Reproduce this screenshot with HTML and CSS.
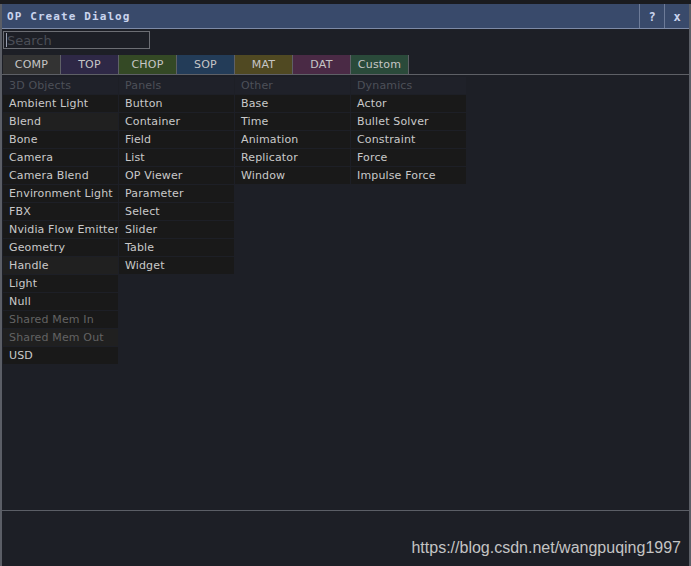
FILE: index.html
```html
<!DOCTYPE html>
<html>
<head>
<meta charset="utf-8">
<link rel="stylesheet" href="styles.css">
</head>
<body>
<div class="topstrip">
  <span></span><span></span><span></span><span></span><span></span>
</div>
<div class="dialog">
  <div class="titlebar">
    <div class="title">OP Create Dialog</div>
    <div class="tbtn">?</div>
    <div class="tbtn">x</div>
  </div>
  <div class="body">
    <div class="search"><span class="caret"></span><span class="ph">Search</span></div>
    <div class="tabs">
      <div class="tab comp">COMP</div>
      <div class="tab top">TOP</div>
      <div class="tab chop">CHOP</div>
      <div class="tab sop">SOP</div>
      <div class="tab mat">MAT</div>
      <div class="tab dat">DAT</div>
      <div class="tab custom">Custom</div>
    </div>
    <div class="columns">
      <div class="col">
        <div class="head">3D Objects</div>
        <div class="item">Ambient Light</div>
        <div class="item lite">Blend</div>
        <div class="item">Bone</div>
        <div class="item">Camera</div>
        <div class="item">Camera Blend</div>
        <div class="item">Environment Light</div>
        <div class="item">FBX</div>
        <div class="item">Nvidia Flow Emitter</div>
        <div class="item">Geometry</div>
        <div class="item lite">Handle</div>
        <div class="item">Light</div>
        <div class="item">Null</div>
        <div class="item dim">Shared Mem In</div>
        <div class="item dim lite">Shared Mem Out</div>
        <div class="item">USD</div>
      </div>
      <div class="col">
        <div class="head">Panels</div>
        <div class="item">Button</div>
        <div class="item">Container</div>
        <div class="item">Field</div>
        <div class="item">List</div>
        <div class="item">OP Viewer</div>
        <div class="item">Parameter</div>
        <div class="item">Select</div>
        <div class="item">Slider</div>
        <div class="item">Table</div>
        <div class="item">Widget</div>
      </div>
      <div class="col">
        <div class="head">Other</div>
        <div class="item">Base</div>
        <div class="item">Time</div>
        <div class="item">Animation</div>
        <div class="item">Replicator</div>
        <div class="item">Window</div>
      </div>
      <div class="col">
        <div class="head">Dynamics</div>
        <div class="item">Actor</div>
        <div class="item">Bullet Solver</div>
        <div class="item">Constraint</div>
        <div class="item">Force</div>
        <div class="item">Impulse Force</div>
      </div>
    </div>
  </div>
  <div class="footer">
    <span class="watermark">https://blog.csdn.net/wangpuqing1997</span>
  </div>
</div>
</body>
</html>
```
FILE: styles.css
```css
html, body {
  margin: 0;
  padding: 0;
  background: #1d1f26;
  width: 691px;
  height: 566px;
  overflow: hidden;
}
.topstrip {
  height: 4px;
  background: #1a1b1f;
  display: flex;
  padding-left: 55px;
}
.topstrip span {
  width: 1px;
  background: #2e3036;
  margin-right: 146px;
}
.dialog {
  height: 562px;
  border-left: 2px solid #5b5e66;
  border-right: 2px solid #5b5e66;
  box-sizing: border-box;
  display: flex;
  flex-direction: column;
}
.titlebar {
  height: 24px;
  background: #394a6b;
  border-bottom: 1px solid #7d8aa6;
  display: flex;
  align-items: stretch;
}
.title {
  flex: 1;
  font-family: "DejaVu Sans Mono", monospace;
  font-weight: bold;
  font-size: 11px;
  letter-spacing: 1.1px;
  color: #c9d4ee;
  padding-left: 5px;
  padding-top: 1px;
  line-height: 24px;
}
.tbtn {
  width: 24px;
  border-left: 1px solid #6d7b98;
  font-family: "DejaVu Sans Mono", monospace;
  font-weight: bold;
  font-size: 12px;
  color: #c9d4ee;
  text-align: center;
  line-height: 24px;
  padding-top: 1px;
}
.body {
  flex: 1;
  padding: 2px 0 0 1px;
  font-family: "DejaVu Sans", sans-serif;
  font-size: 11px;
}
.search {
  width: 145px;
  height: 16px;
  border: 1px solid #6c6e74;
  display: flex;
  align-items: center;
  font-size: 13px;
  color: #4b4e56;
  margin-bottom: 6px;
}
.caret {
  width: 1px;
  height: 14px;
  background: #9aa0b0;
  margin-left: 2px;
}
.ph { margin-top: 1px; }
.tabs {
  display: flex;
  height: 19px;
  border-bottom: 1px solid #5e6066;
  margin-left: -1px;
  padding-left: 1px;
}
.tab {
  width: 57px;
  border-left: 1px solid #5e6066;
  text-align: center;
  color: #c6c6c6;
  line-height: 20px;
  font-size: 11px;
  letter-spacing: 0.2px;
}
.tab:first-child { border-left: none; }
.comp { background: #333333; }
.top { background: #2e2846; }
.chop { background: #344925; }
.sop { background: #233c58; }
.mat { background: #504922; }
.dat { background: #4a2a45; }
.custom { background: #2a4a3a; border-right: 1px solid #5e6066; }
.columns {
  display: flex;
  gap: 1px;
  margin-top: 2px;
}
.col {
  width: 115px;
  display: flex;
  flex-direction: column;
  gap: 1px;
}
.head, .item {
  height: 17px;
  line-height: 17px;
  padding-left: 6px;
  white-space: nowrap;
  overflow: hidden;
  letter-spacing: 0.15px;
}
.head {
  color: #4d5058;
  background: #1f2129;
}
.item {
  background: #191919;
  color: #c9c9c9;
}
.item.lite { background: #202020; }
.item.dim { color: #636363; }
.footer {
  height: 56px;
  border-top: 1px solid #5b5e66;
  display: flex;
  justify-content: flex-end;
  align-items: flex-end;
  padding: 0 8px 9px 0;
  box-sizing: border-box;
}
.watermark {
  font-family: "Liberation Sans", Arial, sans-serif;
  font-size: 16px;
  color: #c4c4c4;
}
```
